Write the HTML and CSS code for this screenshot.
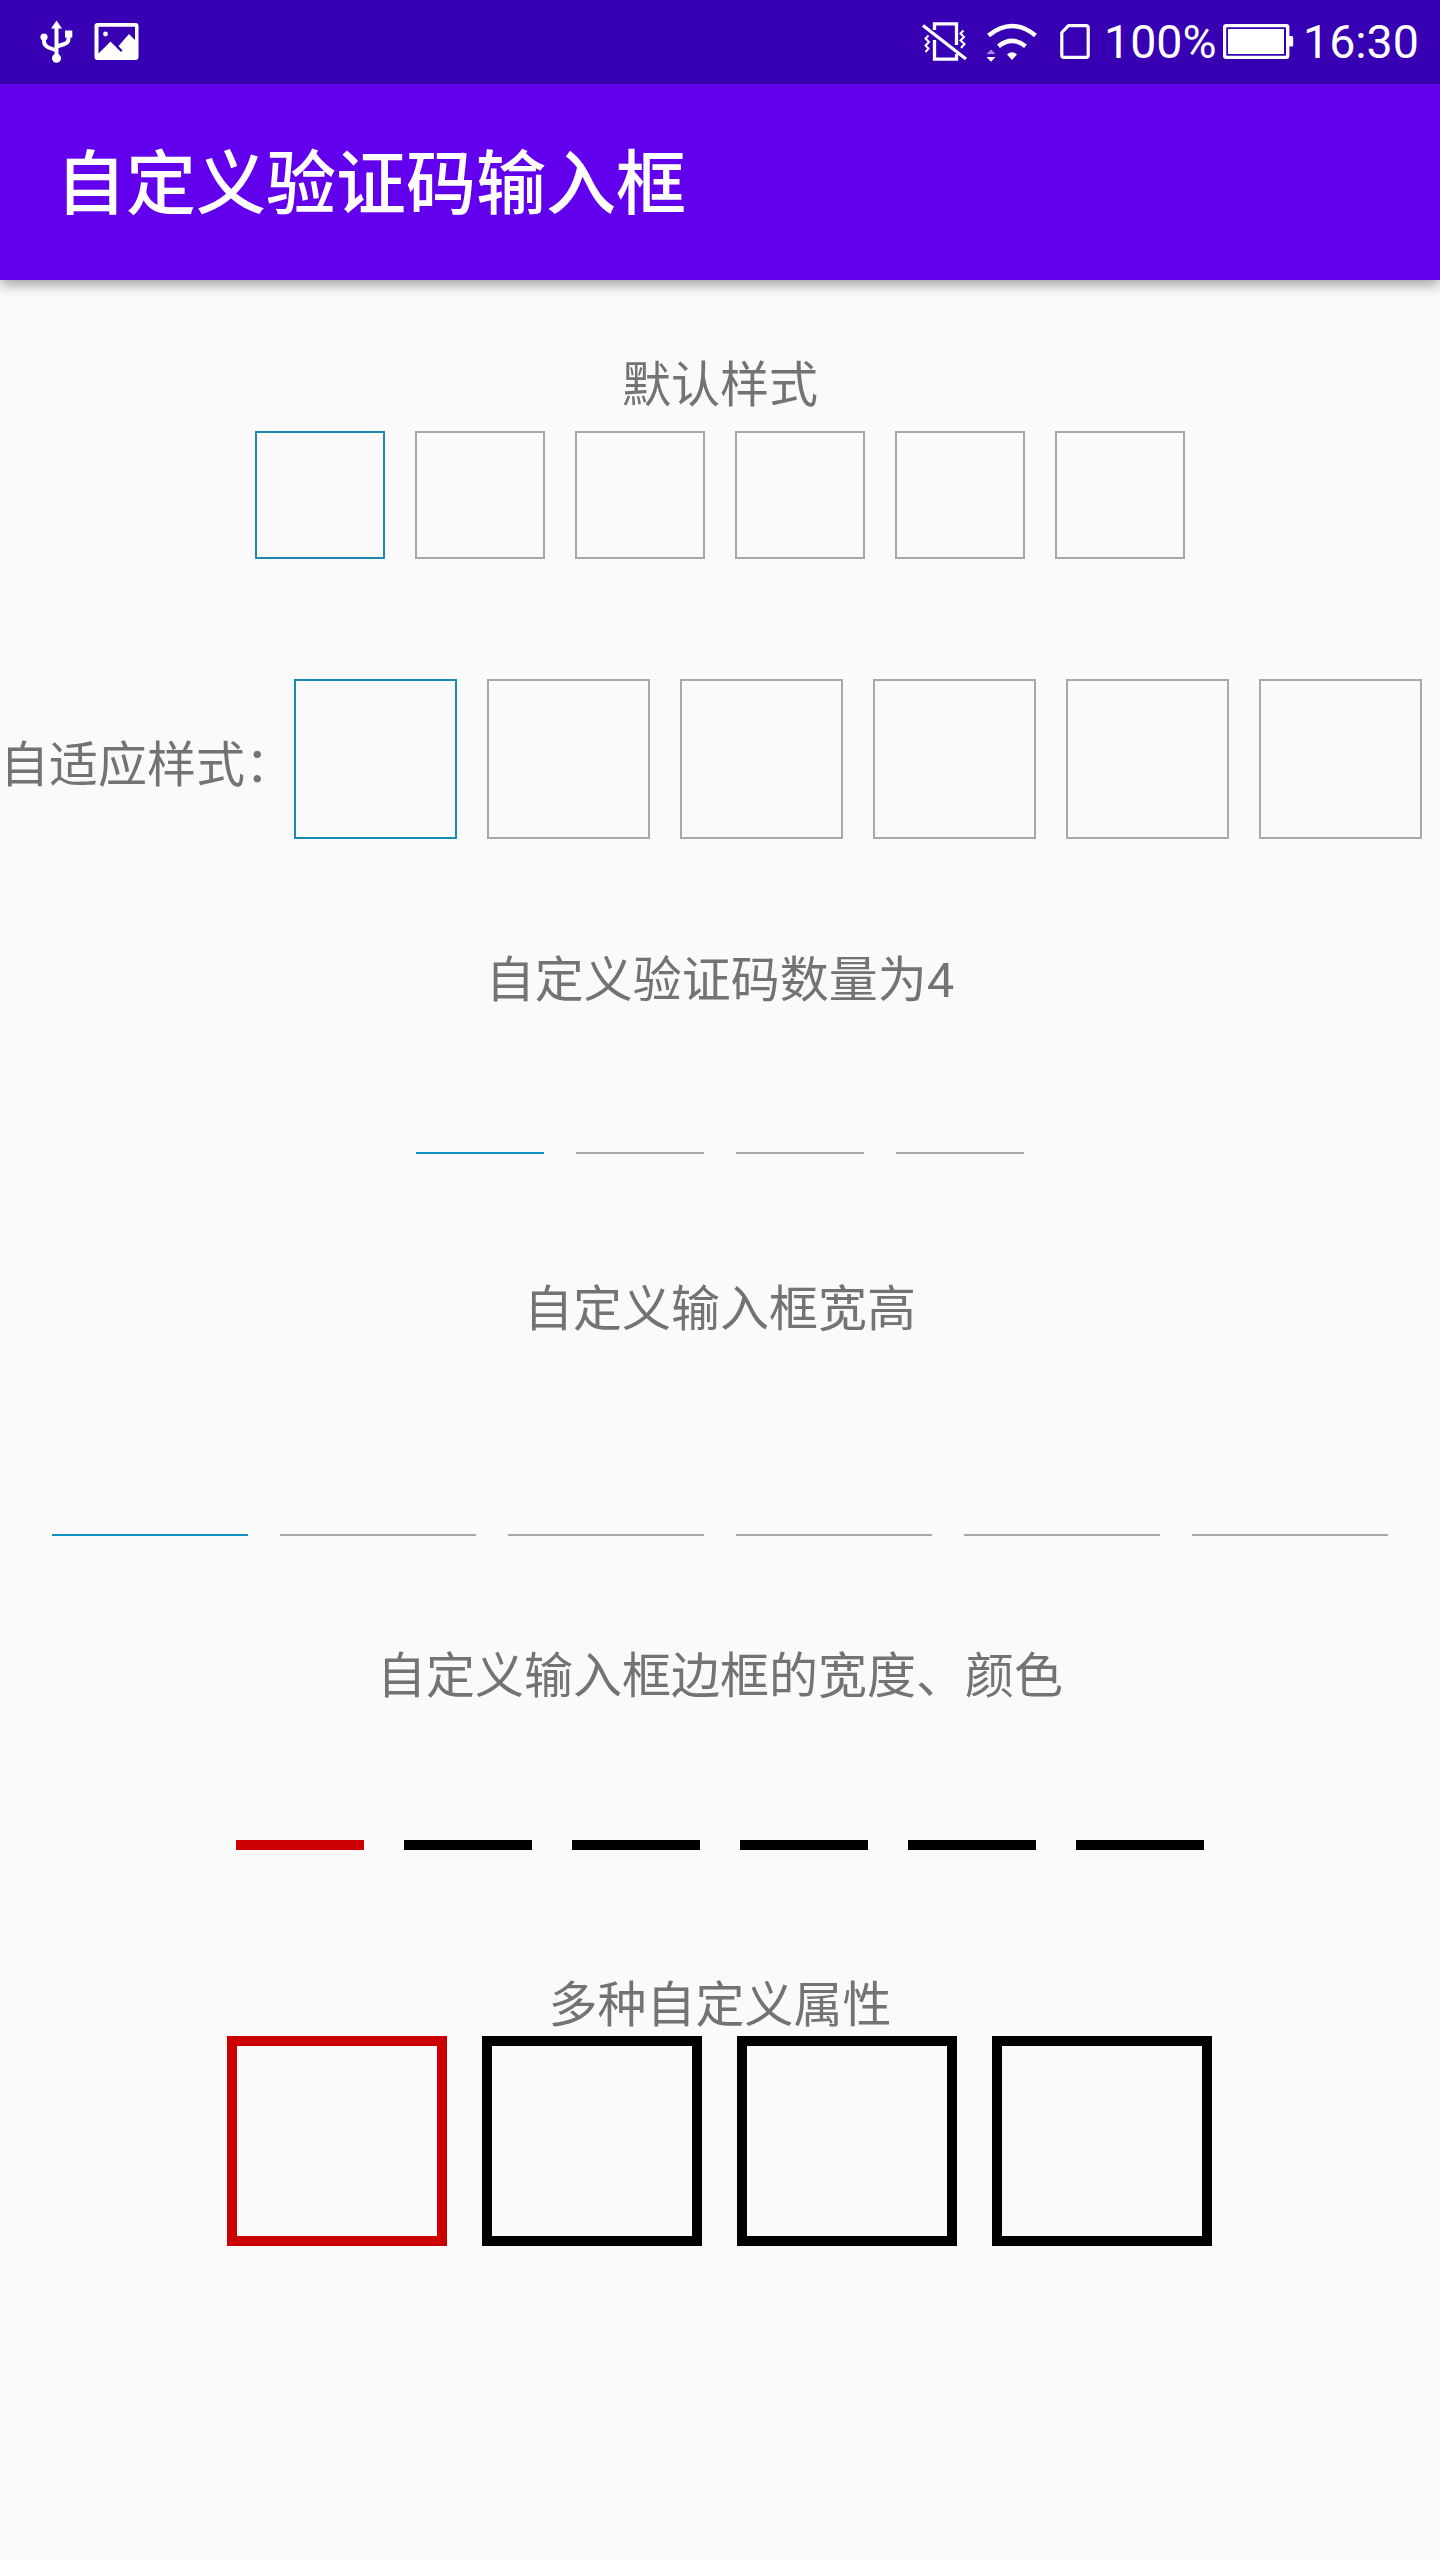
FILE: index.html
```html
<!DOCTYPE html>
<html lang="zh-CN">
<head>
<meta charset="utf-8">
<title>自定义验证码输入框</title>
<link rel="stylesheet" href="styles.css">
</head>
<body>
<header class="status">
  <svg class="icon usb" width="40" height="84" viewBox="36 0 40 84">
    <g fill="none" stroke="#fff" stroke-width="4"><path d="M56.500 26V56M44 38v3q0 4.500 4.500 6.500l8 3M68.500 34v5q0 3.500-4 5l-8 2.500"/></g>
    <g fill="#fff"><path d="M56.500 20.500l5.500 8H51z"/><circle cx="44" cy="37" r="3.600"/><path d="M65 30.500h7.300v7H65z"/><circle cx="56.500" cy="58.300" r="4.500"/></g>
  </svg>
  <svg class="icon picture" width="46" height="84" viewBox="94 0 46 84">
    <path fill="#fff" fill-rule="evenodd" d="M97.500 23h38q3 0 3 3v31q0 3-3 3h-38q-3 0-3-3V26q0-3 3-3zM98.500 26.800V53.500L110.500 41.500 121 52 122.500 50.500 118.500 46 129 34 135 40V26.800z"/>
    <circle cx="105.500" cy="34" r="2.400" fill="#fff"/>
  </svg>
  <svg class="icon vibrate" width="48" height="84" viewBox="921 0 48 84">
    <g fill="none" stroke="#fff">
      <path stroke-width="3.300" d="M934.500 30V23.800H956.500V45M934.500 40V59.200H956.500V54"/>
      <path stroke-width="3.300" d="M923 25.500L966 59"/>
      <path stroke-width="2" d="M928.500 35.500l-3 3 3.500 3.500-3.500 3.500 3 3-3 3.500M963.500 30.500l-3 3 3.500 3.500-3.500 3.500 4 3.500-3.500 4"/>
    </g>
  </svg>
  <svg class="icon wifi" width="54" height="84" viewBox="985 0 54 84">
    <g fill="none" stroke="#fff" stroke-width="4.500"><path d="M988.500 35.500Q1012 16.500 1035.500 35.500M998.500 46.200Q1012 35.500 1025.500 46.200"/></g>
    <path fill="#fff" d="M1007 54.500q5-4.500 10 0L1012 60zM986.500 57h9l-4.500 4.800z"/>
    <path fill="#a58ae0" d="M986.500 54h9l-4.500-4.500z"/>
  </svg>
  <svg class="icon sim" width="32" height="84" viewBox="1059 0 32 84">
    <path fill="none" stroke="#fff" stroke-width="3.200" stroke-linejoin="round" d="M1068.500 25.600H1086q2.200 0 2.200 2.200V55.200q0 2.200-2.200 2.200H1064q-2.200 0-2.200-2.200V32.500z"/>
  </svg>
  <span class="percent">100%</span>
  <svg class="icon battery" width="72" height="84" viewBox="1222 0 72 84">
    <rect x="1224.700" y="25.700" width="63" height="31.600" rx="1.500" fill="none" stroke="#fff" stroke-width="3.400"/>
    <path fill="#fff" d="M1228 29h56v25h-56zM1289 36h3q1.200 0 1.200 1.500v7.500q0 1.500-1.200 1.500h-3z"/>
    <path fill="none" stroke="#3700b3" stroke-width="1.200" d="M1227.200 28h57.600v27h-57.600z"/>
  </svg>
  <time class="clock">16:30</time>
</header>
<div class="appbar"><h1 class="title">自定义验证码输入框</h1></div>
<main class="content">
  <section class="demo demo-default">
    <h2 class="label">默认样式</h2>
    <div class="code"><i class="cell active"></i><i class="cell"></i><i class="cell"></i><i class="cell"></i><i class="cell"></i><i class="cell"></i></div>
  </section>
  <section class="demo demo-adaptive">
    <h2 class="label">自适应样式：</h2>
    <div class="code"><i class="cell active"></i><i class="cell"></i><i class="cell"></i><i class="cell"></i><i class="cell"></i><i class="cell"></i></div>
  </section>
  <section class="demo demo-count">
    <h2 class="label">自定义验证码数量为4</h2>
    <div class="code underline"><i class="cell active"></i><i class="cell"></i><i class="cell"></i><i class="cell"></i></div>
  </section>
  <section class="demo demo-size">
    <h2 class="label">自定义输入框宽高</h2>
    <div class="code underline"><i class="cell active"></i><i class="cell"></i><i class="cell"></i><i class="cell"></i><i class="cell"></i><i class="cell"></i></div>
  </section>
  <section class="demo demo-border">
    <h2 class="label">自定义输入框边框的宽度、颜色</h2>
    <div class="code underline bold"><i class="cell active"></i><i class="cell"></i><i class="cell"></i><i class="cell"></i><i class="cell"></i><i class="cell"></i></div>
  </section>
  <section class="demo demo-multi">
    <h2 class="label">多种自定义属性</h2>
    <div class="code bold"><i class="cell active"></i><i class="cell"></i><i class="cell"></i><i class="cell"></i></div>
  </section>
</main>
</body>
</html>
```

FILE: styles.css
```css
* { box-sizing: border-box; }
body {
  margin: 0;
  width: 1440px;
  height: 2560px;
  background: #fafafa;
  font-family: Roboto, "Noto Sans CJK SC", sans-serif;
  overflow: hidden;
}
.status {
  display: flex;
  height: 84px;
  padding-left: 36px;
  background: #3700b3;
  color: #fff;
  font-size: 46.5px;
  line-height: 84px;
  white-space: nowrap;
}
.icon { display: block; flex: none; }
.picture { margin-left: 18px; }
.vibrate { margin-left: 781px; }
.wifi { margin-left: 16px; }
.sim { margin-left: 20px; }
.percent { width: 116px; margin-left: 13px; }
.battery { margin-left: 2px; }
.clock { margin-left: 9px; }
.appbar {
  display: flex;
  align-items: center;
  height: 196px;
  padding: 6px 0 0 56px;
  background: #6200ee;
  box-shadow: 0 5px 12px rgba(0, 0, 0, .35);
}
.title {
  margin: 0;
  color: #fff;
  font-size: 70px;
  font-weight: 500;
  line-height: 100px;
}
.content {
  display: flex;
  flex-direction: column;
  padding-top: 70px;
}
.demo { display: flex; flex-direction: column; align-items: center; }
.label {
  margin: 0;
  color: #737373;
  font-size: 49px;
  font-weight: 400;
  line-height: 72px;
  height: 66px;
  white-space: nowrap;
}
.code { display: flex; gap: 30px; }
.cell {
  width: 130px;
  height: 128px;
  border: 2px solid #a8a8a8;
}
.active { border-color: #2288ab; }
.underline { gap: 32px; }
.underline .cell { width: 128px; border-width: 0 0 2px; }
.underline .active { border-color: #0f94c4; }
.bold .cell { border-color: #000; }
.bold .active { border-color: #cc0000; }

.demo-default { gap: 15px; }
.demo-adaptive { flex-direction: row; margin-top: 120px; }
.demo-adaptive .label { margin-top: 8px; }
.demo-adaptive .cell { width: 163px; height: 160px; }
.demo-adaptive .active { border-color: #168cb4; }
.demo-count { margin-top: 106px; gap: 15px; }
.demo-count .cell { height: 128px; }
.demo-size { margin-top: 120px; gap: 15px; }
.demo-size .cell { width: 196px; height: 181px; }
.demo-border { margin-top: 105px; gap: 15px; }
.demo-border .code { gap: 40px; }
.demo-border .cell { height: 128px; border-bottom-width: 10px; }
.demo-multi { margin-top: 120px; }
.demo-multi .code { gap: 35px; margin-right: 1px; }
.demo-multi .cell { width: 220px; height: 210px; border-width: 10px; }
```
